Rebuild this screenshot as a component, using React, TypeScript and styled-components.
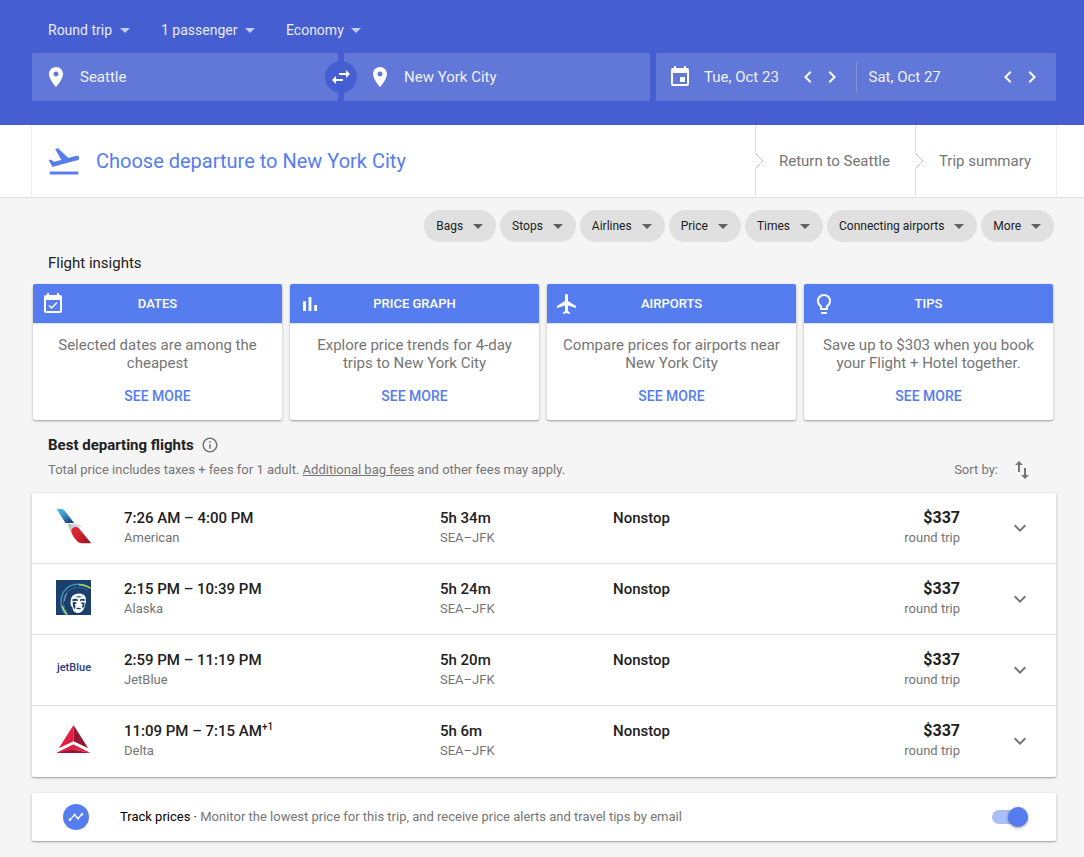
import React, { useState } from 'react';
import styled, { createGlobalStyle } from 'styled-components';

const color = {
  header: '#455ed2',
  field: '#6178d9',
  accent: '#567df0',
  ink: '#212121',
  muted: '#757575',
  line: '#e0e0e0',
  page: '#f5f5f5',
};

const cardShadow = '0 1px 3px rgba(0, 0, 0, 0.25), 0 1px 1px rgba(0, 0, 0, 0.15)';

const GlobalStyle = createGlobalStyle`
  *, *::before, *::after { box-sizing: border-box; }
  body {
    margin: 0;
    min-height: 100vh;
    background: ${color.page};
    color: ${color.ink};
    font-family: Roboto, "Liberation Sans", sans-serif;
    font-size: 14px;
    line-height: 18px;
  }
  h1, h2, h3, p, ul, ol { margin: 0; padding: 0; }
  ul, ol { list-style: none; }
  button, input, select { font: inherit; color: inherit; margin: 0; }
  button { border: 0; padding: 0; background: none; cursor: pointer; }
  svg { display: block; flex: none; fill: currentColor; }
`;

const paths = {
  place:
    'M12 2C8.13 2 5 5.13 5 9c0 5.25 7 13 7 13s7-7.75 7-13c0-3.87-3.13-7-7-7zm0 9.5c-1.38 0-2.5-1.12-2.5-2.5s1.12-2.5 2.5-2.5 2.5 1.12 2.5 2.5-1.12 2.5-2.5 2.5z',
  event:
    'M17 12h-5v5h5v-5zM16 1v2H8V1H6v2H5c-1.11 0-1.99.9-1.99 2L3 19c0 1.1.89 2 2 2h14c1.1 0 2-.9 2-2V5c0-1.1-.9-2-2-2h-1V1h-2zm3 18H5V8h14v11z',
  eventCheck:
    'M16.53 11.06L15.47 10l-4.88 4.88-2.12-2.12-1.06 1.06L10.59 17l5.94-5.94zM19 3h-1V1h-2v2H8V1H6v2H5c-1.11 0-1.99.9-1.99 2L3 19c0 1.1.89 2 2 2h14c1.1 0 2-.9 2-2V5c0-1.1-.9-2-2-2zm0 16H5V8h14v11z',
  left: 'M15.41 7.41L14 6l-6 6 6 6 1.41-1.41L10.83 12z',
  right: 'M10 6L8.59 7.41 13.17 12l-4.58 4.59L10 18l6-6z',
  down: 'M16.59 8.59L12 13.17 7.41 8.59 6 10l6 6 6-6z',
  swapHoriz: 'M6.99 11L3 15l3.99 4v-3H14v-2H6.99v-3zM21 9l-3.99-4v3H10v2h7.01v3L21 9z',
  swapVert: 'M16 17.01V10h-2v7.01h-3L15 21l4-3.99h-3zM9 3L5 6.99h3V14h2V6.99h3L9 3z',
  takeoff:
    'M2.5 19h19v2h-19zm19.57-9.36c-.21-.8-1.04-1.28-1.84-1.06L14.92 10l-6.9-6.43-1.93.51 4.14 7.17-4.97 1.33-1.97-1.54-1.45.39 1.82 3.16.77 1.33 1.6-.43 5.31-1.42 4.35-1.16L21 11.49c.81-.23 1.28-1.05 1.07-1.85z',
  bars: 'M5 9.2h3V19H5zM10.6 5h2.8v14h-2.8zm5.6 8H19v6h-2.8z',
  plane:
    'M21 16v-2l-8-5V3.5c0-.83-.67-1.5-1.5-1.5S10 2.67 10 3.5V9l-8 5v2l8-2.5V19l-2 1.5V22l3.5-1 3.5 1v-1.5L13 19v-5.5l8 2.5z',
  bulb:
    'M9 21c0 .55.45 1 1 1h4c.55 0 1-.45 1-1v-1H9v1zm3-19C8.14 2 5 5.14 5 9c0 2.38 1.19 4.47 3 5.74V17c0 .55.45 1 1 1h6c.55 0 1-.45 1-1v-2.26c1.81-1.27 3-3.36 3-5.74 0-3.86-3.14-7-7-7zm2.85 11.1l-.85.6V16h-4v-2.3l-.85-.6C7.8 12.16 7 10.63 7 9c0-2.76 2.24-5 5-5s5 2.24 5 5c0 1.63-.8 3.16-2.15 4.1z',
  info:
    'M11 17h2v-6h-2v6zm1-15C6.48 2 2 6.48 2 12s4.48 10 10 10 10-4.48 10-10S17.52 2 12 2zm0 18c-4.41 0-8-3.59-8-8s3.59-8 8-8 8 3.59 8 8-3.59 8-8 8zM11 9h2V7h-2v2z',
  timeline:
    'M23 8c0 1.1-.9 2-2 2-.18 0-.35-.02-.51-.07l-3.56 3.55c.05.16.07.34.07.52 0 1.1-.9 2-2 2s-2-.9-2-2c0-.18.02-.36.07-.52l-2.55-2.55c-.16.05-.34.07-.52.07s-.36-.02-.52-.07l-4.55 4.56c.05.16.07.33.07.51 0 1.1-.9 2-2 2s-2-.9-2-2 .9-2 2-2c.18 0 .35.02.51.07l4.56-4.55C8.02 9.36 8 9.18 8 9c0-1.1.9-2 2-2s2 .9 2 2c0 .18-.02.36-.07.52l2.55 2.55c.16-.05.34-.07.52-.07s.36.02.52.07l3.55-3.56C19.02 8.35 19 8.18 19 8c0-1.1.9-2 2-2s2 .9 2 2z',
};

type IconName = keyof typeof paths;

const Icon = ({ name, size = 24 }: { name: IconName; size?: number }) => (
  <svg width={size} height={size} viewBox="0 0 24 24" aria-hidden="true">
    <path d={paths[name]} />
  </svg>
);

const Caret = () => (
  <svg width="10" height="5" viewBox="0 0 10 5" aria-hidden="true">
    <path d="M0 0h10L5 5z" />
  </svg>
);

/* ---------- Search header ---------- */

const Header = styled.header`
  background: ${color.header};
  color: #fff;
  padding: 20px 28px 24px 32px;
`;

const TripOptions = styled.div`
  display: flex;
  gap: 31px;
  padding: 0 16px 13px;
`;

const OptionBox = styled.label`
  position: relative;
  display: flex;
  align-items: center;
  color: #e8ebfa;

  svg {
    position: absolute;
    right: 0;
    color: #c3cbf1;
    pointer-events: none;
  }
`;

const OptionSelect = styled.select`
  appearance: none;
  border: 0;
  padding: 0 17px 0 0;
  height: 20px;
  background: transparent;
`;

const SearchForm = styled.form`
  display: grid;
  grid-template-columns: 306fr 306fr 400fr;
  gap: 6px;
`;

const Field = styled.div`
  position: relative;
  display: flex;
  align-items: center;
  min-width: 0;
  height: 48px;
  border-radius: 2px;
  background: ${color.field};
`;

const PlaceLabel = styled.label<{ $afterSwap?: boolean }>`
  display: flex;
  flex: 1;
  align-items: center;
  gap: 12px;
  min-width: 0;
  padding: 0 24px 0 ${(p) => (p.$afterSwap ? 24 : 12)}px;
`;

const FieldInput = styled.input`
  flex: 1;
  min-width: 0;
  width: 0;
  border: 0;
  padding: 0;
  height: 24px;
  background: transparent;
  color: #eef0fb;
  font-size: 15px;
`;

const SwapButton = styled.button`
  position: absolute;
  z-index: 1;
  right: -19px;
  display: grid;
  place-items: center;
  width: 32px;
  height: 32px;
  border-radius: 50%;
  background: ${color.header};
`;

const DateHalf = styled.div`
  display: flex;
  flex: 1;
  align-items: center;
  min-width: 0;
  padding: 0 12px;

  & + & {
    border-left: 1px solid #8092e2;
    height: 32px;
  }
`;

const DateLabel = styled.label`
  display: flex;
  flex: 1;
  align-items: center;
  gap: 12px;
  min-width: 0;
`;

/* ---------- Booking steps ---------- */

const StepBar = styled.nav`
  padding: 0 27px 0 31px;
  background: #fff;
  border-bottom: 1px solid ${color.line};
`;

const StepList = styled.ol`
  display: flex;
  height: 72px;
  border: solid #eee;
  border-width: 0 1px;
`;

const CurrentStep = styled.li`
  display: flex;
  flex: 1;
  align-items: center;
  gap: 14px;
  padding-left: 14px;
  color: ${color.accent};
`;

const StepTitle = styled.h1`
  font-size: 20px;
  font-weight: 400;
  line-height: 24px;
`;

const NextStep = styled.li`
  position: relative;
  display: flex;
  align-items: center;
  padding: 0 25px 0 23px;
  border-left: 1px solid ${color.line};
  color: ${color.muted};
  font-size: 15px;

  svg {
    position: absolute;
    left: -1px;
  }
`;

/* ---------- Results page ---------- */

const Main = styled.main`
  padding: 12px 28px 16px 32px;
`;

const Filters = styled.div`
  display: flex;
  flex-wrap: wrap;
  justify-content: flex-end;
  gap: 4px;
  padding-right: 2px;
`;

const FilterChip = styled.button`
  display: flex;
  align-items: center;
  gap: 10px;
  height: 32px;
  padding: 0 13px 0 12px;
  border-radius: 16px;
  background: #e0e0e0;
  font-size: 12px;
  color: ${color.ink};

  svg { color: #616161; }
`;

const SectionTitle = styled.h2<{ $strong?: boolean }>`
  font-size: 15px;
  font-weight: ${(p) => (p.$strong ? 700 : 400)};
  line-height: 20px;
`;

const InsightsHeading = styled.div`
  padding: 11px 16px;
`;

const InsightGrid = styled.div`
  display: grid;
  grid-template-columns: repeat(4, 1fr);
  gap: 8px;
  padding: 0 3px 0 1px;
`;

const InsightCard = styled.article`
  overflow: hidden;
  border-radius: 2px;
  background: #fff;
  box-shadow: ${cardShadow};
  text-align: center;
`;

const InsightHead = styled.header`
  display: grid;
  grid-template-columns: 24px 1fr 24px;
  align-items: center;
  height: 40px;
  padding: 0 8px;
  border-bottom: 1px solid ${color.line};
  background: ${color.accent};
  background-clip: padding-box;
  color: #fff;
`;

const InsightTitle = styled.h3`
  font-size: 13px;
  font-weight: 500;
`;

const InsightBody = styled.div`
  display: flex;
  flex-direction: column;
  align-items: center;
  gap: 14px;
  padding: 12px 12px 14px;
`;

const InsightText = styled.p`
  min-height: 36px;
  color: ${color.muted};
  font-size: 15px;
`;

const SeeMore = styled.button`
  height: 20px;
  color: ${color.accent};
  font-weight: 500;
`;

const ResultsHead = styled.div`
  display: flex;
  align-items: flex-end;
  justify-content: space-between;
  padding: 15px 22px 14px 16px;
`;

const TitleRow = styled.div`
  display: flex;
  align-items: center;
  gap: 7px;
  padding-bottom: 6px;
`;

const InfoButton = styled.button`
  color: ${color.muted};
`;

const Note = styled.p`
  color: ${color.muted};
  font-size: 13px;

  a { color: inherit; }
`;

const SortButton = styled.button`
  display: flex;
  align-items: center;
  gap: 12px;
  height: 18px;
  color: ${color.muted};
  font-size: 13px;
`;

const Panel = styled.ul`
  border-radius: 2px;
  background: #fff;
  box-shadow: ${cardShadow};
`;

const FlightRow = styled.li`
  display: grid;
  grid-template-columns: 68px 316fr 173fr 260fr 87fr 96px;
  height: 71px;
  padding: 15px 0 0 24px;

  &:not(:last-child) { border-bottom: 1px solid ${color.line}; }
`;

const Cell = styled.div<{ $end?: boolean }>`
  text-align: ${(p) => (p.$end ? 'right' : 'left')};
`;

const Primary = styled.p<{ $price?: boolean }>`
  font-size: ${(p) => (p.$price ? 16 : 15)}px;
  font-weight: ${(p) => (p.$price ? 700 : 500)};
  line-height: 20px;

  sup {
    font-size: 10px;
    line-height: 1;
    vertical-align: 6px;
  }
`;

const Secondary = styled.p`
  color: ${color.muted};
  font-size: 13px;
  line-height: 20px;
`;

const ExpandButton = styled.button`
  justify-self: end;
  align-self: start;
  margin: 8px 24px 0 0;
  color: ${color.muted};
`;

const JetBlueMark = styled.span`
  display: grid;
  place-items: center;
  width: 36px;
  height: 36px;
  color: #2b3a7e;
  font-size: 11px;
  font-weight: 500;
`;

const TrackBar = styled.label`
  display: flex;
  align-items: center;
  height: 48px;
  margin-top: 16px;
  padding: 0 28px 0 31px;
  border-radius: 2px;
  background: #fff;
  box-shadow: ${cardShadow};
`;

const TrackBadge = styled.span`
  display: grid;
  place-items: center;
  width: 26px;
  height: 26px;
  border-radius: 50%;
  background: ${color.accent};
  color: #fff;
`;

const TrackText = styled.span`
  flex: 1;
  padding-left: 31px;
  color: ${color.muted};
  font-size: 13px;
`;

const TrackTitle = styled.span`
  color: #000;
`;

const Toggle = styled.input`
  appearance: none;
  display: flex;
  align-items: center;
  width: 36px;
  height: 14px;
  margin: 0;
  border-radius: 7px;
  background: #bdbdbd;
  cursor: pointer;

  &::before {
    content: '';
    width: 20px;
    height: 20px;
    border-radius: 50%;
    background: #fafafa;
    box-shadow: 0 1px 3px rgba(0, 0, 0, 0.4);
  }

  &:checked {
    justify-content: flex-end;
    background: #aabef7;
  }

  &:checked::before { background: ${color.accent}; }
`;

/* ---------- Airline logos ---------- */

const AmericanLogo = () => (
  <svg width="36" height="36" viewBox="0 0 36 36" role="img" aria-label="American">
    <defs>
      <linearGradient id="aaBlue" x1="0" y1="0" x2="0.6" y2="1">
        <stop offset="0" stopColor="#4cc4ec" />
        <stop offset="0.5" stopColor="#3b93c8" />
        <stop offset="1" stopColor="#1c4a85" />
      </linearGradient>
      <linearGradient id="aaRed" x1="0" y1="0" x2="1" y2="0.4">
        <stop offset="0" stopColor="#e2252f" />
        <stop offset="0.5" stopColor="#d3232e" />
        <stop offset="1" stopColor="#9c1722" />
      </linearGradient>
      <linearGradient id="aaGrey" x1="0" y1="0" x2="1" y2="0">
        <stop offset="0" stopColor="#b4bfcb" />
        <stop offset="1" stopColor="#e6eaee" />
      </linearGradient>
    </defs>
    <path fill="url(#aaBlue)" d="M.6 1h4.800c1.400 0 2.200.5 3.100 1.600L18.200 15H9.500z" />
    <path fill="url(#aaGrey)" d="M11.500 16.400c4-1.200 9.500-1 13.500 1.200l1.300.3c-.6 1-1.700 1.500-3 1.300-3-.6-5.800.5-7 2.600-.6 1-.9 1.600-1 3-1.500-2.700-2.500-5.400-3.800-8.400z" />
    <path fill="url(#aaRed)" d="M15.500 24.500c-.8-3.400 1.400-5.800 5-5.600.9 0 1.500.3 2.100 1L35.300 35.200H25.500c-2 0-3.300-.7-4.500-2.100-2.400-2.800-4.300-5.200-5.500-8.600z" />
  </svg>
);

const AlaskaLogo = () => (
  <svg width="35" height="36" viewBox="0 -1 35 36" role="img" aria-label="Alaska">
    <path fill="#1b3f6b" d="M0 0h35v35H0z" />
    <g fill="none">
      <path stroke="#3f94b4" strokeWidth="1.500" d="M10 34.500C3.500 28 3 15.500 10.500 8.500 17 2.700 27 3 34.500 8" />
      <path stroke="#a9d86a" strokeWidth="1.500" d="M23 4.700c4.400.1 8 1.200 11.500 3.600M6.300 26c.9 3.400 2.700 6.300 5 8.500" />
      <path stroke="#3a6f98" strokeWidth="1" d="M10.500 31C6 25 6.500 16.500 12 11.200 17.500 6.500 26 6.500 31.500 10.500" />
      <path stroke="#7fb0c8" strokeWidth="1" d="M8.500 21c.2-3 1-5.500 2.500-7.600" />
    </g>
    <path fill="#fff" d="M16.500 16c2-2.800 8.500-3.700 11.500-1 1.900 1.600 1.800 3.600 1.700 5.200.5 1.600.2 3.400-.8 4.900-.2 3-1.500 5.300-3.600 6.900-2.200 1.500-4.900 1.300-6.700-.1-1.400-1.100-1.900-2.500-2.100-4.300-1.800-1.500-2.400-3.900-1.800-5.800 0-2.400.5-4.300 1.800-5.800z" />
    <path fill="#1b3f6b" d="M16.200 19.600c2-1.300 4-1.300 5.800.1l-.2 1.500c-1.800-.7-3.400-.6-5 .2zM23.800 19.600c1.700-1.100 3.400-1.100 5.200 0l-.4 1.500c-1.500-.6-3-.6-4.500 0zM16.600 22.500c1.300-.6 3-.5 4.200.2-.4 1-1.200 1.300-2 1.400l.8 2.400-1 3c-1.200-2-1.900-4.500-2-7zM24.500 22.500l4.200-.1c-.1 2.300-.7 4.500-1.800 6.200l-.9-2.200.8-2.200c-.9 0-1.800-.6-2.300-1.700zM20 28.300c1.700-.6 3.500-.6 5.200.1-1.500 1.200-3.700 1.200-5.200-.1zM19 17c2.400-.9 5.400-.9 7.800-.1-2.600.4-5.200.8-7.800.1z" />
  </svg>
);

const DeltaLogo = () => (
  <svg width="36" height="36" viewBox="0 0 36 36" role="img" aria-label="Delta">
    <path fill="#e01f40" d="M17.500 4v16.200L2.800 27.300z" />
    <path fill="#951735" d="M17.500 4v16.200l14.700 7.100z" />
    <path fill="#951735" d="M17.500 23.500L.5 32h17zM17.500 28.500L34.700 32H17.500z" />
    <path fill="#e01f40" d="M17.500 23.500v5L.5 32zM17.500 23.500v5L34.700 32z" />
  </svg>
);

const JetBlueLogo = () => <JetBlueMark>jetBlue</JetBlueMark>;

/* ---------- Data ---------- */

const tripOptions = [
  { label: 'Trip type', value: 'Round trip' },
  { label: 'Passengers', value: '1 passenger' },
  { label: 'Cabin', value: 'Economy' },
];

const filters = ['Bags', 'Stops', 'Airlines', 'Price', 'Times', 'Connecting airports', 'More'];

const insights: { icon: IconName; title: string; text: string }[] = [
  { icon: 'eventCheck', title: 'DATES', text: 'Selected dates are among the cheapest' },
  { icon: 'bars', title: 'PRICE GRAPH', text: 'Explore price trends for 4-day trips to New York City' },
  { icon: 'plane', title: 'AIRPORTS', text: 'Compare prices for airports near New York City' },
  { icon: 'bulb', title: 'TIPS', text: 'Save up to $303 when you book your Flight + Hotel together.' },
];

const flights = [
  { airline: 'American', Logo: AmericanLogo, times: '7:26 AM – 4:00 PM', duration: '5h 34m' },
  { airline: 'Alaska', Logo: AlaskaLogo, times: '2:15 PM – 10:39 PM', duration: '5h 24m' },
  { airline: 'JetBlue', Logo: JetBlueLogo, times: '2:59 PM – 11:19 PM', duration: '5h 20m' },
  { airline: 'Delta', Logo: DeltaLogo, times: '11:09 PM – 7:15 AM', nextDay: '+1', duration: '5h 6m' },
];

/* ---------- Parts ---------- */

const StepNotch = () => (
  <svg width="9" height="16" viewBox="0 0 9 16" aria-hidden="true">
    <path fill="#fff" d="M0 1h1l7 7-7 7H0z" />
    <path fill="none" stroke="#c8c8c8" d="M.5 .5L8 8 .5 15.500" />
  </svg>
);

const DateField = ({ label, value, icon }: { label: string; value: string; icon?: boolean }) => (
  <DateHalf>
    <DateLabel>
      {icon && <Icon name="event" />}
      <FieldInput aria-label={label} defaultValue={value} />
    </DateLabel>
    <button type="button" aria-label={`${label}: previous day`}>
      <Icon name="left" />
    </button>
    <button type="button" aria-label={`${label}: next day`}>
      <Icon name="right" />
    </button>
  </DateHalf>
);

export default function App() {
  const [from, setFrom] = useState('Seattle');
  const [to, setTo] = useState('New York City');

  const swap = () => {
    setFrom(to);
    setTo(from);
  };

  return (
    <>
      <GlobalStyle />
      <Header>
        <TripOptions>
          {tripOptions.map((o) => (
            <OptionBox key={o.label}>
              <OptionSelect aria-label={o.label}>
                <option>{o.value}</option>
              </OptionSelect>
              <Caret />
            </OptionBox>
          ))}
        </TripOptions>
        <SearchForm>
          <Field>
            <PlaceLabel>
              <Icon name="place" />
              <FieldInput aria-label="From" value={from} onChange={(e) => setFrom(e.target.value)} />
            </PlaceLabel>
            <SwapButton type="button" aria-label="Swap origin and destination" onClick={swap}>
              <Icon name="swapHoriz" />
            </SwapButton>
          </Field>
          <Field>
            <PlaceLabel $afterSwap>
              <Icon name="place" />
              <FieldInput aria-label="To" value={to} onChange={(e) => setTo(e.target.value)} />
            </PlaceLabel>
          </Field>
          <Field>
            <DateField label="Departure date" value="Tue, Oct 23" icon />
            <DateField label="Return date" value="Sat, Oct 27" />
          </Field>
        </SearchForm>
      </Header>

      <StepBar>
        <StepList>
          <CurrentStep>
            <Icon name="takeoff" size={36} />
            <StepTitle>Choose departure to New York City</StepTitle>
          </CurrentStep>
          <NextStep>
            <StepNotch />
            Return to Seattle
          </NextStep>
          <NextStep>
            <StepNotch />
            Trip summary
          </NextStep>
        </StepList>
      </StepBar>

      <Main>
        <Filters>
          {filters.map((f) => (
            <FilterChip key={f} type="button" aria-haspopup="dialog">
              {f}
              <Caret />
            </FilterChip>
          ))}
        </Filters>

        <InsightsHeading>
          <SectionTitle>Flight insights</SectionTitle>
        </InsightsHeading>
        <InsightGrid>
          {insights.map((i) => (
            <InsightCard key={i.title}>
              <InsightHead>
                <Icon name={i.icon} />
                <InsightTitle>{i.title}</InsightTitle>
              </InsightHead>
              <InsightBody>
                <InsightText>{i.text}</InsightText>
                <SeeMore type="button">SEE MORE</SeeMore>
              </InsightBody>
            </InsightCard>
          ))}
        </InsightGrid>

        <ResultsHead>
          <div>
            <TitleRow>
              <SectionTitle $strong>Best departing flights</SectionTitle>
              <InfoButton type="button" aria-label="About these results">
                <Icon name="info" size={18} />
              </InfoButton>
            </TitleRow>
            <Note>
              Total price includes taxes + fees for 1 adult. <a href="#bag-fees">Additional bag fees</a> and other
              fees may apply.
            </Note>
          </div>
          <SortButton type="button">
            Sort by:
            <Icon name="swapVert" />
          </SortButton>
        </ResultsHead>

        <Panel>
          {flights.map(({ airline, Logo, times, nextDay, duration }) => (
            <FlightRow key={airline}>
              <Logo />
              <Cell>
                <Primary>
                  {times}
                  {nextDay && <sup>{nextDay}</sup>}
                </Primary>
                <Secondary>{airline}</Secondary>
              </Cell>
              <Cell>
                <Primary>{duration}</Primary>
                <Secondary>SEA–JFK</Secondary>
              </Cell>
              <Cell>
                <Primary>Nonstop</Primary>
              </Cell>
              <Cell $end>
                <Primary $price>$337</Primary>
                <Secondary>round trip</Secondary>
              </Cell>
              <ExpandButton type="button" aria-label={`Show details of the ${airline} flight`}>
                <Icon name="down" />
              </ExpandButton>
            </FlightRow>
          ))}
        </Panel>

        <TrackBar>
          <TrackBadge>
            <Icon name="timeline" size={16} />
          </TrackBadge>
          <TrackText>
            <TrackTitle>Track prices ·</TrackTitle> Monitor the lowest price for this trip, and receive price alerts
            and travel tips by email
          </TrackText>
          <Toggle type="checkbox" defaultChecked />
        </TrackBar>
      </Main>
    </>
  );
}
